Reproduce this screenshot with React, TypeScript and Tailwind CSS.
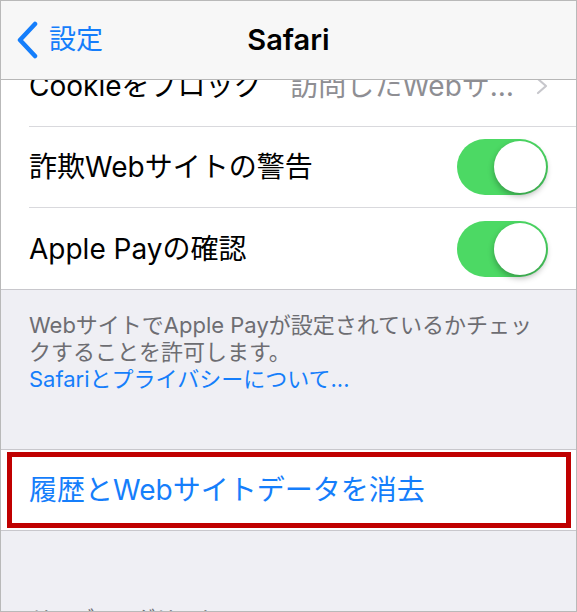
import React from "react"

const font = { fontFamily: '"Inter", "Noto Sans CJK JP", sans-serif' }

function Toggle() {
  return (
    <div className="relative h-[56px] w-[91px] rounded-full bg-[#4cd964]">
      <div className="absolute right-[2px] top-[2px] h-[52px] w-[52px] rounded-full bg-white shadow-[0_3px_6px_rgba(0,0,0,0.3)]" />
    </div>
  )
}

function Row({ label, right, last }: { label: string; right: React.ReactNode; last?: boolean }) {
  return (
    <div className="flex h-[81px] pl-[28px]">
      <div
        className={
          "flex flex-1 items-center justify-between pr-[28px] " +
          (last ? "" : "border-b border-[#d9d9dd]")
        }
      >
        <span className="text-[28px] text-black">{label}</span>
        {right}
      </div>
    </div>
  )
}

export default function App() {
  return (
    <div
      className="relative flex h-[612px] w-[577px] flex-col overflow-hidden border border-[#b9b9b9] bg-[#efeff4]"
      style={font}
    >
      <div className="relative z-10 flex h-[79px] shrink-0 items-center border-b border-[#b7b7b7] bg-[#f7f7f7]">
        <div className="flex items-center pl-[14px] text-[#157efb]">
          <svg width="24" height="38" viewBox="0 0 24 38" fill="none">
            <path d="M20 3 L5 19 L20 35" stroke="#157efb" strokeWidth="4.5" strokeLinecap="round" strokeLinejoin="round" />
          </svg>
          <span className="ml-[10px] text-[27px]">設定</span>
        </div>
        <div className="absolute inset-x-0 text-center text-[29px] font-semibold text-black pointer-events-none">
          Safari
        </div>
      </div>

      <div className="-mt-[34px] border-b border-[#c8c7cc] bg-white">
        <Row
          label="Cookieをブロック"
          right={
            <div className="flex items-center gap-[22px]">
              <span className="text-[28px] text-[#8e8e93]">訪問したWebサ…</span>
              <svg width="12" height="18" viewBox="0 0 12 18" fill="none">
                <path d="M2 2 L10 9 L2 16" stroke="#c7c7cc" strokeWidth="2.2" strokeLinecap="round" strokeLinejoin="round" />
              </svg>
            </div>
          }
        />
        <Row label="詐欺Webサイトの警告" right={<Toggle />} />
        <Row label="Apple Payの確認" right={<Toggle />} last />
      </div>

      <div className="h-[159px] shrink-0 px-[28px] pt-[22px] text-[22px] leading-[27px]">
        <p className="whitespace-nowrap text-[#6d6d72]">
          WebサイトでApple Payが設定されているかチェッ
          <br />
          クすることを許可します。
        </p>
        <p className="text-[#157efb]">Safariとプライバシーについて...</p>
      </div>

      <div className="flex h-[82px] shrink-0 items-center border-y border-[#c8c7cc] bg-white pl-[28px]">
        <span className="text-[28px] text-[#157efb]">履歴とWebサイトデータを消去</span>
      </div>

      <div className="px-[30px] pt-[72px] text-[21px] text-[#6d6d72]">リーディングリスト</div>

      <div className="pointer-events-none absolute left-[6px] top-[451px] h-[76px] w-[564px] border-[5px] border-[#c00000]" />
    </div>
  )
}
